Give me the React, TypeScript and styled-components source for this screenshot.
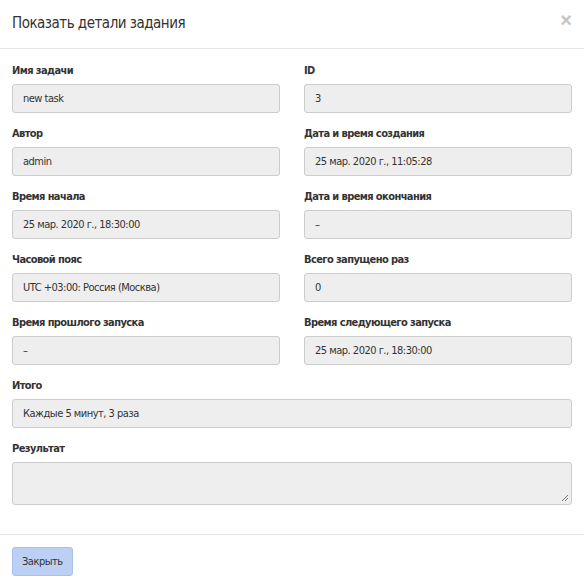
import React from "react";
import styled, { createGlobalStyle } from "styled-components";

const Global = createGlobalStyle`
  body { margin: 0; background: #fff; font-family: "DejaVu Sans Condensed", "DejaVu Sans", sans-serif; color: #333; }
  * { box-sizing: border-box; }
`;

const Modal = styled.div`width: 584px; height: 588px; background: #fff; display: flex; flex-direction: column;`;
const Header = styled.div`height: 49px; border-bottom: 1px solid #e5e5e5; display: flex; align-items: center; justify-content: space-between; padding: 0 12px;`;
const Title = styled.h4`margin: 0; font-size: 15px; letter-spacing: -0.5px; font-weight: normal; color: #333; padding-bottom: 2px;`;
const Close = styled.span`font-size: 20px; font-weight: bold; color: #c4c4c4; font-family: "Liberation Sans", sans-serif; margin-top: -6px;`;
const Body = styled.div`padding: 14px 12px 0; display: grid; grid-template-columns: 1fr 1fr; column-gap: 24px; height: 486px; align-content: start;`;
const Group = styled.div<{ $full?: boolean }>`grid-column: ${p => (p.$full ? "1 / -1" : "auto")}; margin-bottom: 13px;`;
const Label = styled.div`font-size: 11px; letter-spacing: -0.6px; font-weight: bold; height: 21px; line-height: 16px; color: #333;`;
const Field = styled.div<{ $tall?: boolean }>`height: ${p => (p.$tall ? "43px" : "29px")}; background: #eee; border: 1px solid #ccc; border-radius: 3px; font-size: 11px; letter-spacing: -0.5px; padding: 0 10px; display: flex; align-items: center; color: #333; position: relative;`;
const Grip = styled.svg`position: absolute; right: 2px; bottom: 2px;`;
const Footer = styled.div`border-top: 1px solid #e5e5e5; padding: 12px; flex: 1;`;
const Button = styled.button`height: 29px; padding: 0 9px; background: #bcd0f5; border: 1px solid #a8c0ee; border-radius: 3px; font-family: inherit; font-size: 11px; letter-spacing: -0.5px; color: #333;`;

const rows: [string, string][] = [
  ["Имя задачи", "new task"], ["ID", "3"],
  ["Автор", "admin"], ["Дата и время создания", "25 мар. 2020 г., 11:05:28"],
  ["Время начала", "25 мар. 2020 г., 18:30:00"], ["Дата и время окончания", "–"],
  ["Часовой пояс", "UTC +03:00: Россия (Москва)"], ["Всего запущено раз", "0"],
  ["Время прошлого запуска", "–"], ["Время следующего запуска", "25 мар. 2020 г., 18:30:00"],
];

export default function App() {
  return (
    <Modal>
      <Global />
      <Header><Title>Показать детали задания</Title><Close>×</Close></Header>
      <Body>
        {rows.map(([l, v]) => (
          <Group key={l}><Label>{l}</Label><Field>{v}</Field></Group>
        ))}
        <Group $full><Label>Итого</Label><Field>Каждые 5 минут, 3 раза</Field></Group>
        <Group $full><Label>Результат</Label><Field $tall>
          <Grip width="8" height="8" viewBox="0 0 8 8"><path d="M7 1L1 7M7 4L4 7" stroke="#777" strokeWidth="1" /></Grip>
        </Field></Group>
      </Body>
      <Footer><Button>Закрыть</Button></Footer>
    </Modal>
  );
}
